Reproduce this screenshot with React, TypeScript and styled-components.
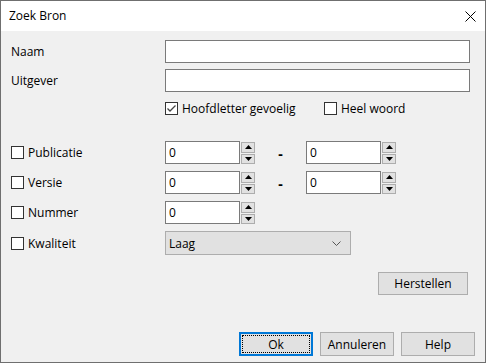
import styled, { createGlobalStyle } from "styled-components";

const GlobalStyle = createGlobalStyle`
  html, body {
    margin: 0;
    padding: 0;
    background: #ffffff;
  }
  body {
    font-family: "Open Sans", "Noto Sans", "Liberation Sans", sans-serif;
    font-size: 12px;
    color: #000000;
  }
`;

const Window = styled.div`
  width: 486px;
  height: 363px;
  box-sizing: border-box;
  border: 1px solid #6f6f6f;
  display: flex;
  flex-direction: column;
  background: #f0f0f0;
`;

const TitleBar = styled.div`
  height: 30px;
  flex: none;
  background: #ffffff;
  display: flex;
  align-items: center;
  justify-content: space-between;
  padding: 0 9px 0 8px;
  h1 {
    margin: 0;
    font-size: 12px;
    font-weight: normal;
    padding-bottom: 1px;
  }
`;

const Body = styled.div`
  flex: 1;
  display: flex;
  flex-direction: column;
  padding: 9px 15px 6px 10px;
`;

const Row = styled.div<{ $top?: number; $h?: number }>`
  display: flex;
  align-items: center;
  margin-top: ${p => p.$top ?? 0}px;
  height: ${p => p.$h ?? 23}px;
`;

const LabelCell = styled.div`
  width: 154px;
  flex: none;
  display: flex;
  align-items: center;
`;

const Label = styled.span`
  line-height: 15px;
`;

const TextInput = styled.div<{ $w?: number }>`
  box-sizing: border-box;
  height: 23px;
  width: ${p => (p.$w ? `${p.$w}px` : "auto")};
  flex: ${p => (p.$w ? "none" : "1")};
  background: #ffffff;
  border: 1px solid #7a7a7a;
  padding: 0 3px;
  display: flex;
  align-items: center;
`;

const CheckItem = styled.label<{ $w?: number }>`
  display: flex;
  align-items: center;
  gap: 4px;
  width: ${p => (p.$w ? `${p.$w}px` : "auto")};
  flex: none;
`;

const Box = styled.span`
  box-sizing: border-box;
  width: 13px;
  height: 13px;
  border: 1px solid #333333;
  background: #ffffff;
  display: flex;
  align-items: center;
  justify-content: center;
`;

const Spin = styled.div`
  display: flex;
  flex-direction: column;
  gap: 1px;
  margin-left: 1px;
  height: 23px;
  padding-top: 1px;
  box-sizing: border-box;
`;

const SpinButton = styled.div`
  box-sizing: border-box;
  width: 14px;
  height: 11px;
  background: #e1e1e1;
  border: 1px solid #adadad;
  display: flex;
  align-items: center;
  justify-content: center;
`;

const Dash = styled.div`
  width: 51px;
  flex: none;
  display: flex;
  justify-content: center;
  font-weight: bold;
  font-size: 14px;
  padding-top: 2px;
`;

const Select = styled.div`
  box-sizing: border-box;
  width: 186px;
  height: 24px;
  background: #e1e1e1;
  border: 1px solid #adadad;
  display: flex;
  align-items: center;
  justify-content: space-between;
  padding: 0 9px 0 3px;
`;

const ButtonRow = styled.div<{ $top: number; $right: number }>`
  display: flex;
  justify-content: flex-end;
  gap: 7px;
  margin-top: ${p => p.$top}px;
  margin-right: ${p => p.$right}px;
`;

const Button = styled.div<{ $w: number; $h?: number; $default?: boolean }>`
  box-sizing: border-box;
  position: relative;
  width: ${p => p.$w}px;
  height: ${p => p.$h ?? 23}px;
  background: #e1e1e1;
  border: ${p => (p.$default ? "2px solid #0078d7" : "1px solid #adadad")};
  display: flex;
  align-items: center;
  justify-content: center;
  ${p =>
    p.$default &&
    `
    &::after {
      content: "";
      position: absolute;
      inset: 1px;
      border: 1px dotted #000000;
    }
  `}
`;

const CloseIcon = () => (
  <svg width="11" height="11" viewBox="0 0 11 11">
    <path d="M0.5 0.5 L10.5 10.5 M10.5 0.5 L0.5 10.5" stroke="#000" strokeWidth="1" fill="none" />
  </svg>
);

const CheckMark = () => (
  <svg width="11" height="11" viewBox="0 0 11 11">
    <path d="M1.5 5.5 L4 8 L9.5 2.5" stroke="#444" strokeWidth="1.3" fill="none" />
  </svg>
);

const Check = ({ checked }: { checked?: boolean }) => <Box>{checked && <CheckMark />}</Box>;

const Arrow = ({ up }: { up?: boolean }) => (
  <svg width="7" height="4" viewBox="0 0 7 4">
    <path d={up ? "M0 4 L3.5 0 L7 4 Z" : "M0 0 L7 0 L3.5 4 Z"} fill="#000" />
  </svg>
);

const Chevron = () => (
  <svg width="9" height="5" viewBox="0 0 9 5">
    <path d="M0.5 0.5 L4.5 4.5 L8.5 0.5" stroke="#555" strokeWidth="1" fill="none" />
  </svg>
);

const SpinBox = () => (
  <>
    <TextInput $w={75}>0</TextInput>
    <Spin>
      <SpinButton>
        <Arrow up />
      </SpinButton>
      <SpinButton>
        <Arrow />
      </SpinButton>
    </Spin>
  </>
);

const CheckRowLabel = ({ text }: { text: string }) => (
  <LabelCell>
    <CheckItem>
      <Check />
      <Label>{text}</Label>
    </CheckItem>
  </LabelCell>
);

const App = () => {
  return (
    <>
      <GlobalStyle />
      <Window>
        <TitleBar>
          <h1>Zoek Bron</h1>
          <CloseIcon />
        </TitleBar>
        <Body>
          <Row>
            <LabelCell>
              <Label>Naam</Label>
            </LabelCell>
            <TextInput />
          </Row>
          <Row $top={6}>
            <LabelCell>
              <Label>Uitgever</Label>
            </LabelCell>
            <TextInput />
          </Row>
          <Row $top={9} $h={15}>
            <LabelCell />
            <CheckItem $w={159}>
              <Check checked />
              <Label>Hoofdletter gevoelig</Label>
            </CheckItem>
            <CheckItem>
              <Check />
              <Label>Heel woord</Label>
            </CheckItem>
          </Row>
          <Row $top={25}>
            <CheckRowLabel text="Publicatie" />
            <SpinBox />
            <Dash>-</Dash>
            <SpinBox />
          </Row>
          <Row $top={7}>
            <CheckRowLabel text="Versie" />
            <SpinBox />
            <Dash>-</Dash>
            <SpinBox />
          </Row>
          <Row $top={7}>
            <CheckRowLabel text="Nummer" />
            <SpinBox />
          </Row>
          <Row $top={7} $h={24}>
            <CheckRowLabel text="Kwaliteit" />
            <Select>
              <span>Laag</span>
              <Chevron />
            </Select>
          </Row>
          <ButtonRow $top={17} $right={2}>
            <Button $w={90}>Herstellen</Button>
          </ButtonRow>
          <ButtonRow $top={37} $right={-5}>
            <Button $w={74} $h={24} $default>
              Ok
            </Button>
            <Button $w={74} $h={24}>
              Annuleren
            </Button>
            <Button $w={74} $h={24}>
              Help
            </Button>
          </ButtonRow>
        </Body>
      </Window>
    </>
  );
};

export default App;
